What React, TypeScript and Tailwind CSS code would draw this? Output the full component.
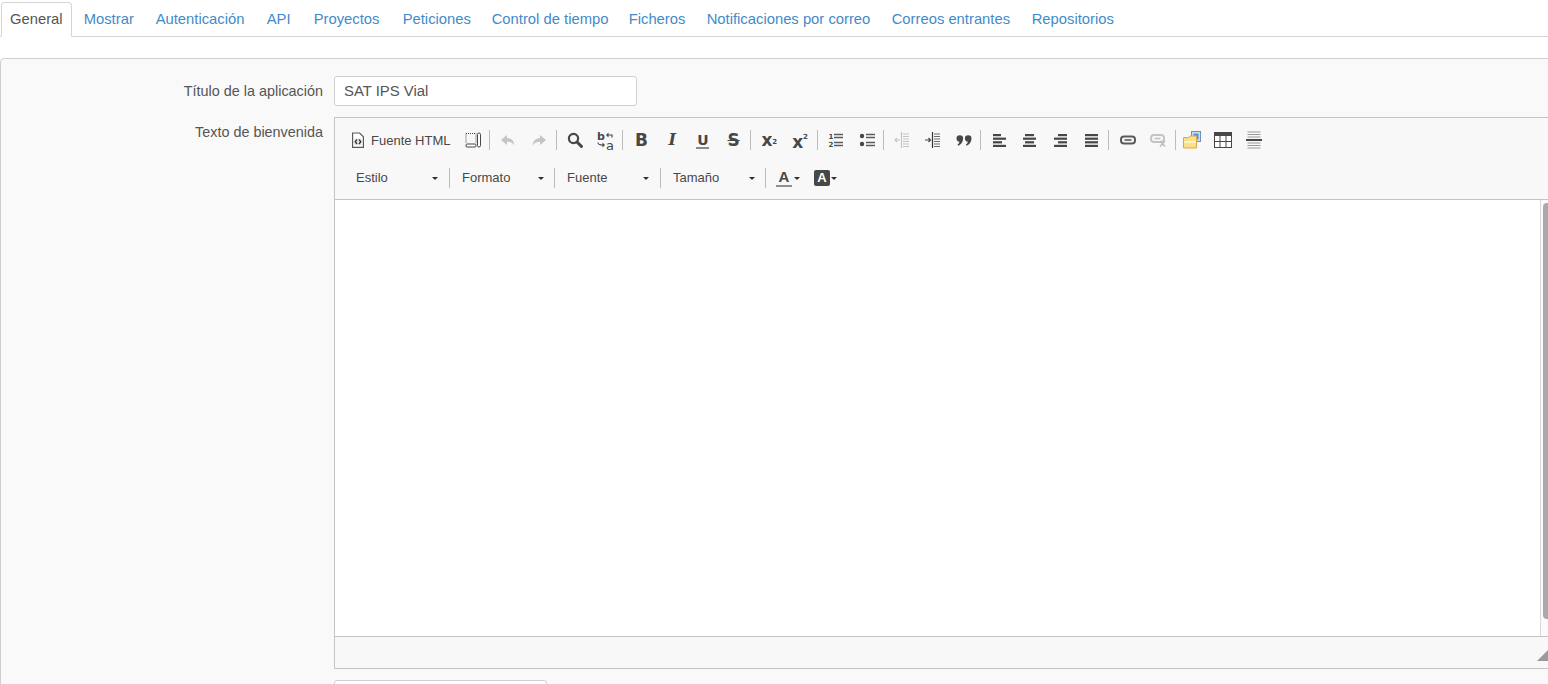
import type { ReactNode } from 'react';

const tabs = [
    { label: 'Mostrar', w: 'w-[70px]' },
    { label: 'Autenticación', w: 'w-[109px]' },
    { label: 'API', w: 'w-[45px]' },
    { label: 'Proyectos', w: 'w-[87px]' },
    { label: 'Peticiones', w: 'w-[87px]' },
    { label: 'Control de tiempo', w: 'w-[135px]' },
    { label: 'Ficheros', w: 'w-[76px]' },
    { label: 'Notificaciones por correo', w: 'w-[183px]' },
    { label: 'Correos entrantes', w: 'w-[138px]' },
    { label: 'Repositorios', w: 'w-[102px]' },
];

const DARK = '#474747';
const OFF = '#c4c4c4';

function Btn({ children }: { children: ReactNode }) {
    return <div className="w-[30.75px] h-6 flex items-center justify-center shrink-0">{children}</div>;
}

function Sep({ tight }: { tight?: boolean }) {
    return <div className={`w-px h-5 bg-[#bcbcbc] ml-px shrink-0 ${tight ? 'mr-px' : 'mr-[3px]'}`}></div>;
}

function ComboSep() {
    return <div className="w-px h-5 bg-[#bcbcbc] shrink-0"></div>;
}

function Ico({ children }: { children: ReactNode }) {
    return <svg width="16" height="16" viewBox="0 0 16 16" className="block shrink-0">{children}</svg>;
}

function Caret({ className = '' }: { className?: string }) {
    return <span className={`block w-0 h-0 border-x-[3px] border-t-[3px] border-x-transparent border-t-[#2f2f2f] ${className}`}></span>;
}

function Combo({ label, wide }: { label: string; wide?: boolean }) {
    return (
        <div className={`${wide ? 'w-[105px]' : 'w-[104px]'} h-6 flex items-center pl-3 shrink-0 text-[13px] text-[#484848]`}>
            <span className="w-[76px]">{label}</span>
            <Caret />
        </div>
    );
}

function Lines({ rows }: { rows: [number, number][] }) {
    return (
        <Ico>
            {rows.map(([x, w], i) => (
                <rect key={i} x={x} y={2 + i * 3.6} width={w} height="2.2" fill={DARK} />
            ))}
        </Ico>
    );
}

function ToolText({ children, className }: { children: ReactNode; className: string }) {
    return <span className={`font-['DejaVu_Sans',sans-serif] text-[#474747] leading-4 ${className}`}>{children}</span>;
}

export default function App() {
    return (
        <div className="h-screen overflow-hidden bg-white font-['Liberation_Sans',Arial,sans-serif] text-[14.4px] text-[#555]">
            {/* Pestañas */}
            <div className="h-[37px] border-b border-[#d5d5d5] flex pl-px pt-[2px] text-[14.8px]">
                <div className="h-[35px] px-2 flex items-center bg-white border border-[#d5d5d5] border-b-white rounded-t-[4px] mr-[2px]">General</div>
                {tabs.map((t) => (
                    <div key={t.label} className={`${t.w} h-[34px] pl-[10px] mr-[2px] flex items-center whitespace-nowrap text-[#428bca]`}>{t.label}</div>
                ))}
            </div>

            {/* Panel principal */}
            <div className="mt-[21px] -mr-5 border border-[#cfcfcf] rounded-[4px] bg-[#f9f9f9] pt-[17px] h-[700px]">
                <div className="flex items-center h-[30px]">
                    <label className="w-[322px] text-right shrink-0 pt-[2px]">Título de la aplicación</label>
                    <input
                        readOnly
                        value="SAT IPS Vial"
                        className="ml-[11px] w-[303px] h-[30px] px-[9px] bg-white border border-[#d0d0d0] rounded-[3px] text-[14.9px] text-[#555] outline-none"
                    />
                </div>

                <div className="flex mt-[11px]">
                    <label className="w-[322px] text-right shrink-0 pt-[5px]">Texto de bienvenida</label>
                    <div className="ml-[11px] w-[1227px] shrink-0">
                        <div className="border border-[#c4c4c4]">
                            {/* Barra de herramientas */}
                            <div className="h-[82px] bg-[#f8f8f8] border-b border-[#c4c4c4] pt-[10px]">
                                <div className="flex items-center h-6 pl-[10px]">
                                    <div className="h-6 w-[112.25px] flex items-center pl-[5px] shrink-0 text-[13px] text-[#484848]">
                                        <Ico>
                                            <path d="M2.6 1h7l3.8 3.8v10.6H2.6z" fill="#fff" stroke="#5a5a5a" strokeWidth="1.2" />
                                            <rect x="4.5" y="6.5" width="7" height="6.5" fill="#e4e4e4" />
                                            <path d="M7 7.5 5.2 9.7 7 12M9 7.5l1.8 2.2L9 12" fill="none" stroke="#333" strokeWidth="1.3" />
                                        </Ico>
                                        <span className="ml-[5px] pt-px">Fuente HTML</span>
                                    </div>
                                    <Btn>
                                        <Ico>
                                            <path d="M1 1.5h10M1 1.5v9M11 1.5v9" stroke={DARK} strokeWidth="1" strokeDasharray="1 1" fill="none" />
                                            <rect x="1" y="12" width="10" height="3" rx="1" fill="#fff" stroke={DARK} />
                                            <rect x="12.5" y="1" width="3" height="14" rx="1.5" fill="#fff" stroke={DARK} />
                                        </Ico>
                                    </Btn>
                                    <Sep />
                                    <Btn>
                                        <Ico><path d="M7 3 1 8l6 5V9.8c3.2 0 5.4 1 7.5 3.7-.5-4.700-3.200-7.200-7.500-7.500z" fill={OFF} /></Ico>
                                    </Btn>
                                    <Btn>
                                        <Ico><path d="m9 3 6 5-6 5V9.800c-3.200 0-5.400 1-7.500 3.700.5-4.700 3.200-7.200 7.500-7.500z" fill={OFF} /></Ico>
                                    </Btn>
                                    <Sep />
                                    <Btn>
                                        <Ico>
                                            <circle cx="6.5" cy="6.5" r="4.6" fill="none" stroke={DARK} strokeWidth="2.2" />
                                            <path d="m10 10 4.400 4.400" stroke={DARK} strokeWidth="3" strokeLinecap="round" />
                                        </Ico>
                                    </Btn>
                                    <Btn>
                                        <svg width="18" height="22" viewBox="0 0 18 22" className="block shrink-0 overflow-visible">
                                            <text x="0" y="11" fontSize="11" fontWeight="700" fontFamily="DejaVu Sans, sans-serif" fill={DARK}>b</text>
                                            <text x="9" y="21" fontSize="13" fontFamily="DejaVu Sans, sans-serif" fill={DARK}>a</text>
                                            <path d="M11 6h4v2.500M1 13.500c0 2 1 2.500 5 2.500" fill="none" stroke={DARK} strokeWidth="1.2" />
                                            <path d="m11.5 3.500-2.500 2.500 2.500 2.500zM5.500 13.500 8 16l-2.500 2.500z" fill={DARK} />
                                        </svg>
                                    </Btn>
                                    <Sep />
                                    <Btn><ToolText className="font-bold text-[17px]">B</ToolText></Btn>
                                    <Btn><span className="font-['DejaVu_Serif',serif] font-bold italic text-[16px] leading-4 text-[#474747]">I</span></Btn>
                                    <Btn>
                                        <div className="flex flex-col items-center mt-[2px]">
                                            <ToolText className="font-bold text-[14px] leading-[12px]">U</ToolText>
                                            <span className="block w-[13px] h-[2px] mt-px bg-[#8a8a8a]"></span>
                                        </div>
                                    </Btn>
                                    <Btn><ToolText className="font-bold text-[17px] line-through">S</ToolText></Btn>
                                    <Sep />
                                    <Btn>
                                        <div className="flex items-end h-4 w-4">
                                            <ToolText className="font-bold text-[17px]">x</ToolText>
                                            <ToolText className="text-[7px] font-bold -mb-[2px]">2</ToolText>
                                        </div>
                                    </Btn>
                                    <Btn>
                                        <div className="flex items-start h-4 w-4">
                                            <ToolText className="font-bold text-[17px] mt-[2px]">x</ToolText>
                                            <ToolText className="text-[7px] font-bold -mt-[3px]">2</ToolText>
                                        </div>
                                    </Btn>
                                    <Sep />
                                    <Btn>
                                        <Ico>
                                            <text x="0.5" y="7" fontSize="7" fontWeight="700" fontFamily="DejaVu Sans, sans-serif" fill={DARK}>1</text>
                                            <text x="0.5" y="15" fontSize="7" fontWeight="700" fontFamily="DejaVu Sans, sans-serif" fill={DARK}>2</text>
                                            <path d="M6 2.500h9M6 5.500h9M6 10.500h9M6 13.500h9" stroke="#5c5c5c" strokeWidth="1.4" />
                                        </Ico>
                                    </Btn>
                                    <Btn>
                                        <Ico>
                                            <circle cx="3" cy="4" r="2.2" fill={DARK} />
                                            <circle cx="3" cy="12" r="2.2" fill={DARK} />
                                            <path d="M7 2.500h9M7 5.500h9M7 10.500h9M7 13.500h9" stroke="#5c5c5c" strokeWidth="1.4" />
                                        </Ico>
                                    </Btn>
                                    <Sep />
                                    <Btn>
                                        <Ico>
                                            <path d="M9 2h6M9 4.500h6M9 7h6M9 9.500h6M9 12h6M9 14.500h6" stroke={OFF} strokeWidth="1.2" />
                                            <path d="M7.500 0v16" stroke={OFF} strokeWidth="1.2" />
                                            <path d="M6 8H1M3 6 1 8l2 2" fill="none" stroke={OFF} strokeWidth="1.2" />
                                        </Ico>
                                    </Btn>
                                    <Btn>
                                        <Ico>
                                            <path d="M9 2h6M9 4.500h6M9 7h6M9 9.500h6M9 12h6M9 14.500h6" stroke="#6b6b6b" strokeWidth="1.2" />
                                            <path d="M7.500 0v16" stroke="#333" strokeWidth="1.2" />
                                            <path d="M0 8h5M3.500 6l2 2-2 2" fill="none" stroke={DARK} strokeWidth="1.2" />
                                        </Ico>
                                    </Btn>
                                    <Btn>
                                        <Ico>
                                            <path d="M.5 6.500a3.300 3.300 0 1 1 6.600 0c0 3.300-2 6-4.800 7.200l-.8-1.200c1.100-.7 1.800-1.600 2-2.800A3.300 3.300 0 0 1 .5 6.500zM8.900 6.500a3.300 3.300 0 1 1 6.600 0c0 3.300-2 6-4.800 7.200l-.8-1.200c1.100-.7 1.800-1.600 2-2.800a3.300 3.300 0 0 1-3-3.200z" fill={DARK} />
                                        </Ico>
                                    </Btn>
                                    <Sep />
                                    <Btn><Lines rows={[[1, 8], [1, 13], [1, 9], [1, 13]]} /></Btn>
                                    <Btn><Lines rows={[[3, 9], [1, 13], [3, 9], [1, 13]]} /></Btn>
                                    <Btn><Lines rows={[[5, 9], [1, 13], [5, 9], [1, 13]]} /></Btn>
                                    <Btn><Lines rows={[[1, 13], [1, 13], [1, 13], [1, 13]]} /></Btn>
                                    <Sep />
                                    <Btn>
                                        <Ico>
                                            <rect x="1" y="4.5" width="14" height="7" rx="3" fill="none" stroke="#5a5a5a" strokeWidth="2" />
                                            <path d="M4.500 8h7" stroke="#5a5a5a" strokeWidth="1.6" />
                                        </Ico>
                                    </Btn>
                                    <Btn>
                                        <Ico>
                                            <rect x="1" y="3" width="13" height="7" rx="3" fill="none" stroke={OFF} strokeWidth="2" />
                                            <path d="M4.500 6.500h6" stroke={OFF} strokeWidth="1.6" />
                                            <path d="m10 9 5 5.500M15 9l-5 5.500" stroke="#bdbdbd" strokeWidth="1.6" />
                                        </Ico>
                                    </Btn>
                                    <Sep tight />
                                    <Btn>
                                        <svg width="18" height="18" viewBox="0 0 18 18" className="block shrink-0">
                                            <rect x="8.5" y="0.5" width="9" height="10" fill="#c9dcf0" stroke="#6f8fbd" />
                                            <rect x="10.5" y="2.5" width="5" height="6" fill="#4f9bd9" />
                                            <path d="M.5 6.500h5l1.500-1.500h6.500v12H.5z" fill="#fbe08a" stroke="#e0a44a" />
                                            <path d="M1 10h12v2H1z" fill="#fff3bf" />
                                        </svg>
                                    </Btn>
                                    <Btn>
                                        <svg width="18" height="16" viewBox="0 0 18 16" className="block shrink-0">
                                            <rect x="0.5" y="0.5" width="17" height="15" fill="#fff" stroke={DARK} />
                                            <rect x="0" y="0" width="18" height="4" fill={DARK} />
                                            <path d="M6 4v11M12 4v11M1 9.500h16" stroke={DARK} strokeWidth="1" />
                                        </svg>
                                    </Btn>
                                    <Btn>
                                        <svg width="16" height="18" viewBox="0 0 16 18" className="block shrink-0">
                                            <path d="M1.500 1h13M1.500 3.500h13M1.500 6h13M1.500 12h13M1.500 14.500h13M1.500 17h13" stroke="#9a9a9a" strokeWidth="1" />
                                            <rect x="0" y="8" width="16" height="2" fill={DARK} />
                                        </svg>
                                    </Btn>
                                </div>

                                <div className="flex items-center h-6 mt-[14px] pl-[9px]">
                                    <Combo label="Estilo" wide />
                                    <ComboSep />
                                    <Combo label="Formato" />
                                    <ComboSep />
                                    <Combo label="Fuente" wide />
                                    <ComboSep />
                                    <Combo label="Tamaño" />
                                    <ComboSep />
                                    <div className="ml-[10px] w-[16px] flex flex-col items-center shrink-0">
                                        <span className="font-bold text-[15px] leading-[14px] text-[#474747]">A</span>
                                        <span className="block w-4 h-[2px] mt-px bg-[#8f8f8f]"></span>
                                    </div>
                                    <Caret className="ml-[2px]" />
                                    <div className="ml-[14px] w-4 h-4 rounded-[2px] bg-[#474747] flex items-center justify-center shrink-0 text-white font-bold text-[13px] leading-4">A</div>
                                    <Caret className="ml-px" />
                                </div>
                            </div>

                            {/* Área de edición */}
                            <div className="h-[437px] flex bg-white border-b border-[#c4c4c4]">
                                <div className="flex-1"></div>
                                <div className="w-[20px] shrink-0 border-l border-[#d9d9d9] bg-[#fafafa] pl-[2px] pt-[3px]">
                                    <div className="h-[416px] bg-[#a9a9a9] rounded-[4px]"></div>
                                </div>
                            </div>

                            {/* Pie del editor */}
                            <div className="h-[31px] bg-[#f8f8f8] pl-[1202px] pt-[13px]">
                                <svg width="11" height="11" viewBox="0 0 11 11" className="block">
                                    <path d="M11 0v11H0z" fill="#9a9a9a" />
                                </svg>
                            </div>
                        </div>

                        <div className="mt-[11px] w-[213px] h-[30px] bg-white border border-[#d0d0d0] rounded-[3px]"></div>
                    </div>
                </div>
            </div>
        </div>
    );
}
